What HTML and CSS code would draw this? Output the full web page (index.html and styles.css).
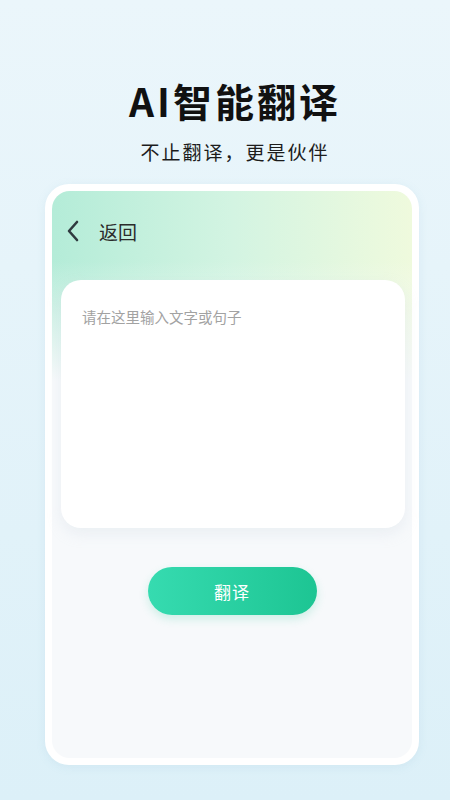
FILE: index.html
```html
<!DOCTYPE html>
<html lang="zh-CN">
<head>
    <meta charset="UTF-8">
    <meta name="viewport" content="width=device-width, initial-scale=1.0">
    <title>AI智能翻译</title>
    <link rel="stylesheet" href="styles.css">
</head>
<body>
    <header class="intro">
        <h1 class="intro-title">AI智能翻译</h1>
        <p class="intro-sub">不止翻译，更是伙伴</p>
    </header>

    <div class="phone">
        <div class="screen">
            <div class="nav">
                <svg class="nav-back" width="14" height="22" viewBox="0 0 14 22">
                    <path d="M11 2 L3 11 L11 20" fill="none" stroke="#2f3a3f" stroke-width="2.6" stroke-linecap="round" stroke-linejoin="round"/>
                </svg>
                <span class="nav-label">返回</span>
            </div>

            <div class="input-card">
                <div class="placeholder">请在这里输入文字或句子</div>
            </div>

            <button class="translate-btn">翻译</button>
        </div>
    </div>
</body>
</html>
```

FILE: styles.css
```css
body {
    margin: 0;
    padding: 0;
    height: 800px;
    overflow: hidden;
    background: linear-gradient(to bottom, #ebf6fb, #dcf0f8);
    font-family: "Noto Sans CJK SC", "Noto Sans", sans-serif;
}
.intro {
    text-align: center;
    padding: 74px 0 0 20px;
}
.intro-title {
    margin: 0;
    font-size: 39px;
    line-height: 52px;
    font-weight: bold;
    letter-spacing: 3px;
    color: #111;
}
.intro-sub {
    margin: 13px 0 0;
    font-size: 19px;
    line-height: 26px;
    letter-spacing: 2px;
    color: #1c1c1c;
}
.phone {
    width: 360px;
    height: 567px;
    margin: 19px 0 0 45px;
    padding: 7px;
    background: #fff;
    border-radius: 24px;
    box-shadow: 0 2px 10px rgba(120, 170, 200, 0.12);
}
.screen {
    height: 100%;
    border-radius: 18px;
    background:
        linear-gradient(to bottom, rgba(247, 249, 251, 0) 70px, #f7f9fb 190px),
        linear-gradient(to right, #b4ecd8, #d3f4e2 50%, #effadd);
    display: flex;
    flex-direction: column;
    align-items: center;
}
.nav {
    align-self: stretch;
    display: flex;
    align-items: center;
    height: 26px;
    margin-top: 27px;
    padding-left: 14px;
}
.nav-label {
    margin-left: 19px;
    font-size: 19px;
    color: #2b2b2b;
}
.input-card {
    align-self: stretch;
    height: 248px;
    margin: 36px 7px 0 9px;
    background: #fff;
    border-radius: 20px;
    box-shadow: 0 6px 14px rgba(200, 210, 225, 0.25);
}
.placeholder {
    padding: 26px 0 0 21px;
    font-size: 14.5px;
    color: #a2a2a2;
}
.translate-btn {
    width: 169px;
    height: 48px;
    margin-top: 39px;
    border: none;
    border-radius: 24px;
    background: linear-gradient(to right, #36dbb0, #1dc593);
    color: #fff;
    font-family: "Noto Sans CJK SC", sans-serif;
    font-size: 17px;
    letter-spacing: 1px;
    box-shadow: 0 4px 10px rgba(40, 200, 150, 0.2);
}
```
